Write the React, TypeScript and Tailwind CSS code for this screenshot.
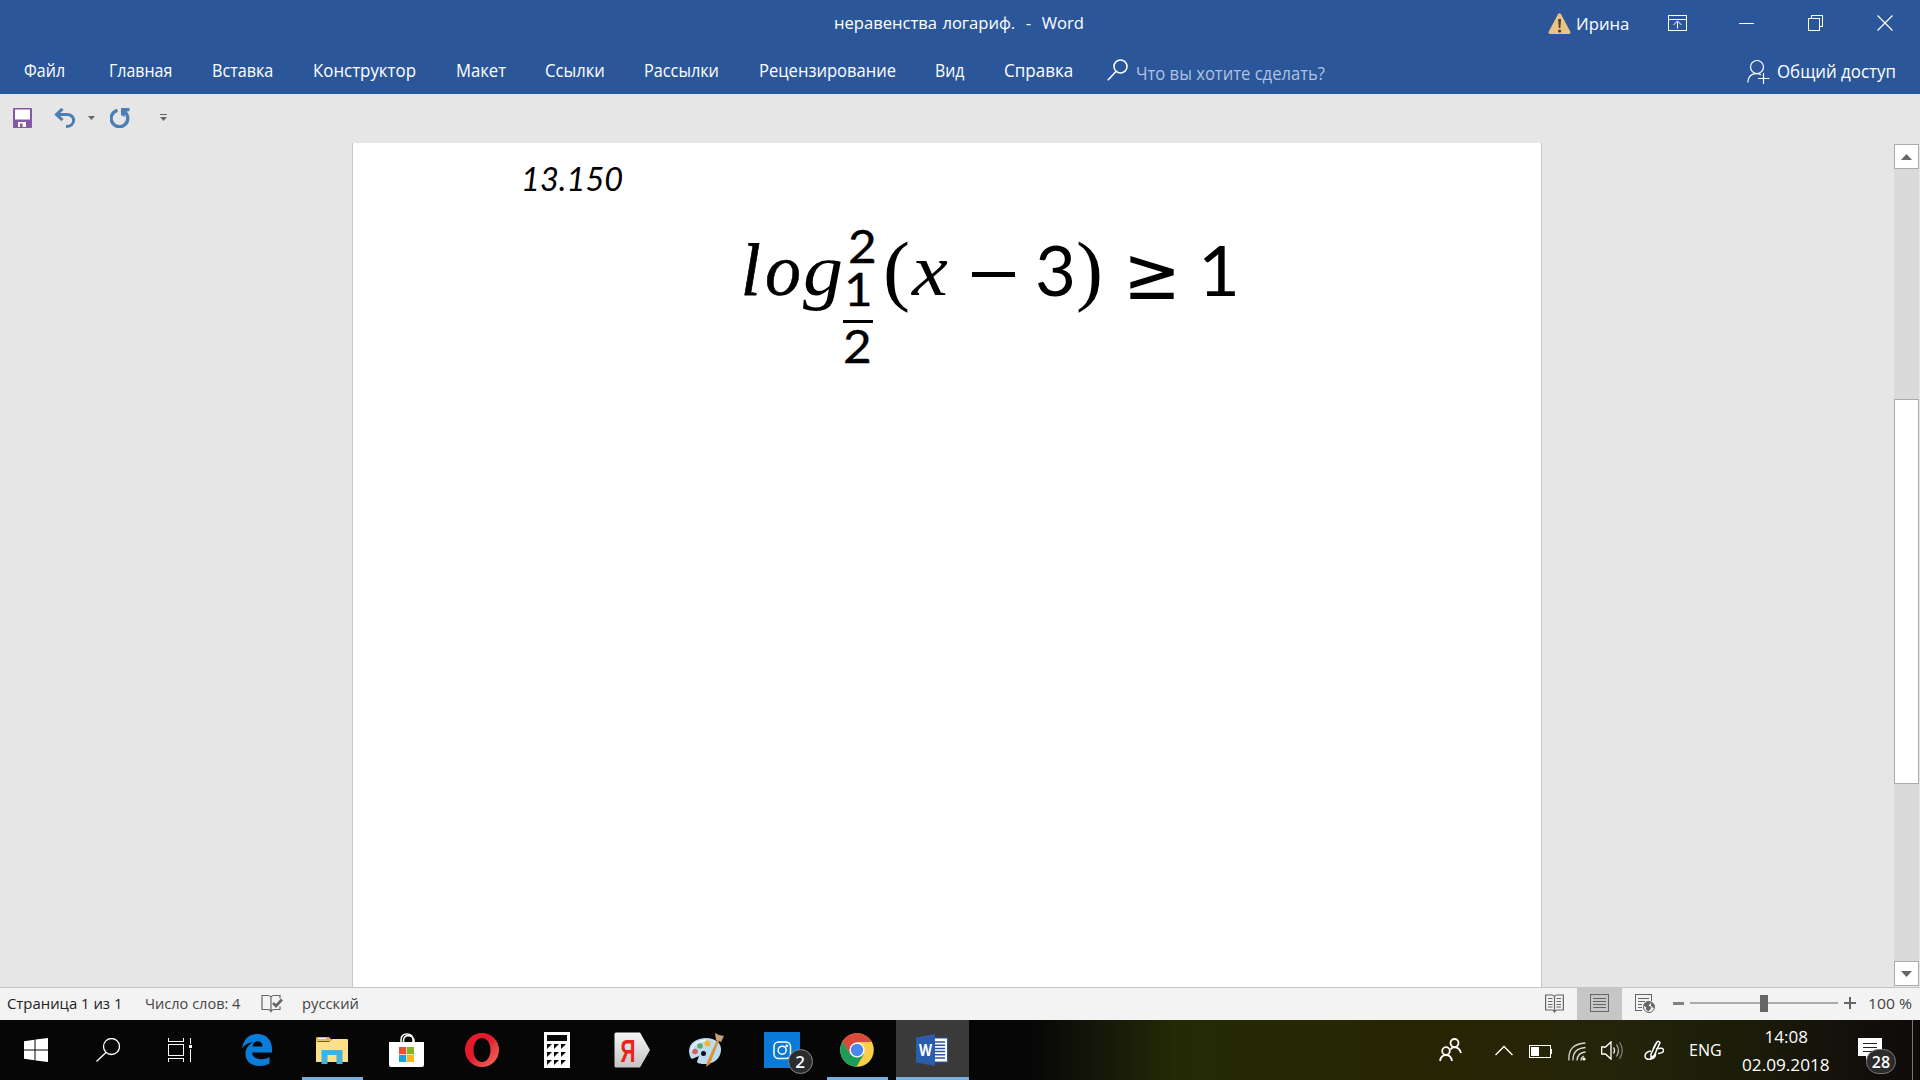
import { useLayoutEffect, useRef, useState, type ReactNode } from 'react'

const menuItems = [
  { label: 'Файл', className: 'mr-1 w-[41px]' },
  { label: 'Главная', className: 'w-[63px]' },
  { label: 'Вставка', className: 'w-[61px]' },
  { label: 'Конструктор', className: 'w-[103px]' },
  { label: 'Макет', className: '-mr-px w-[50px]' },
  { label: 'Ссылки', className: '-mr-px w-[60px]' },
  { label: 'Рассылки', className: 'w-[75px]' },
  { label: 'Рецензирование', className: '-mr-px w-[137px]' },
  { label: 'Вид', className: 'w-[29px]' },
  { label: 'Справка', className: 'w-[69px]' },
]

export default function App() {
  return (
    <div className="flex h-[1080px] w-[1920px] flex-col overflow-hidden bg-[#e6e6e6] font-['Open_Sans','Noto_Sans',sans-serif]">
      <header className="h-[94px] shrink-0 bg-[#2b579a] text-white">
        <TitleBar />
        <MenuBar />
      </header>
      <QuickAccess />
      <Workspace />
      <StatusBar />
      <Taskbar />
    </div>
  )
}

// Squeezes or stretches one line of text to the width of its box.
function FitText({ className, children }: { className: string; children: ReactNode }) {
  const box = useRef<HTMLSpanElement>(null)
  const text = useRef<HTMLSpanElement>(null)
  const [scale, setScale] = useState(1)

  useLayoutEffect(() => {
    if (!box.current || !text.current) return
    setScale(box.current.offsetWidth / text.current.offsetWidth)
  }, [])

  return (
    <span ref={box} className={`block shrink-0 whitespace-pre ${className}`}>
      <span
        ref={text}
        className="inline-block origin-left"
        style={{ transform: `scaleX(${scale})` }}
      >
        {children}
      </span>
    </span>
  )
}

function TitleBar() {
  return (
    <div className="flex h-[47px] items-center pl-[834px] text-[17px]">
      <FitText className="mb-px w-[250px] [word-spacing:1px]">{'неравенства логариф.  -  Word'}</FitText>
      <svg className="ml-[464px] h-[21px] w-[23px]" viewBox="0 0 23 21">
        <path d="M10 1.2Q11.500-.6 13 1.200L22.500 19Q22.800 21 21 21H2Q.2 21 .5 19Z" fill="#eac282" />
        <path d="M10.200 6h2.800l-.6 9h-1.600z" fill="#4a3f2d" />
        <circle cx="11.600" cy="18" r="1.600" fill="#4a3f2d" />
      </svg>
      <FitText className="ml-[5px] w-[53px]">Ирина</FitText>
      <svg className="mt-[-2px] ml-[39px] h-4 w-5" viewBox="0 0 20 16" fill="none" stroke="white" shapeRendering="crispEdges">
        <path d="M.5.5h18v15H.500zM.5 4.500h18" />
        <path d="M9.500 13.500v-7M5.500 10l4-4 4 4" shapeRendering="auto" />
      </svg>
      <svg className="ml-[51px] h-4 w-4" viewBox="0 0 16 16" stroke="white" shapeRendering="crispEdges">
        <path d="M0 7.500h15" />
      </svg>
      <svg className="mt-[-2px] ml-[53px] h-4 w-4" viewBox="0 0 16 16" fill="none" stroke="white" shapeRendering="crispEdges">
        <path d="M.5 3.500h11v12H.500zM3.500 3.500v-3h11v11h-3" />
      </svg>
      <svg className="mt-[-2px] ml-[53px] h-4 w-4" viewBox="0 0 16 16" stroke="white" strokeWidth="1.200">
        <path d="M.5.5l15 15M15.500.5l-15 15" />
      </svg>
    </div>
  )
}

function MenuBar() {
  return (
    <div className="flex h-[46px] items-center text-lg">
      <nav className="flex gap-10 pl-6">
        {menuItems.map((item) => (
          <FitText key={item.label} className={item.className}>
            {item.label}
          </FitText>
        ))}
      </nav>
      <svg className="ml-[34px] h-[22px] w-[21px]" viewBox="0 0 21 22" fill="none" stroke="white" strokeWidth="1.500">
        <circle cx="13.500" cy="7.500" r="6.500" />
        <path d="M9 12.500L.8 21.200" />
      </svg>
      <FitText className="mt-1.5 ml-2 w-[189px] text-[#afc2e0]">
        Что вы хотите сделать?
      </FitText>
      <svg className="mt-[3px] ml-auto h-[25px] w-[23px]" viewBox="0 0 23 25" fill="none" stroke="white" strokeWidth="1.200">
        <circle cx="10" cy="8" r="6.500" />
        <path d="M.7 23.500C1.200 17.500 5 14.600 9.500 14.600c2 0 3.500.5 4.500 1.200" />
        <path d="M16.500 14v11M11 19.500h11.500" />
      </svg>
      <FitText className="mt-0.5 mr-6 ml-[7px] w-[119px]">Общий доступ</FitText>
    </div>
  )
}

function QuickAccess() {
  return (
    <div className="flex h-[49px] shrink-0 items-center pb-0.5 pl-[13px]">
      <svg className="h-5 w-[19px]" viewBox="0 0 19 20">
        <rect width="19" height="20" rx="1" fill="#8558a5" />
        <path d="M2 1.500h15v10H2zM5 14h8v5H5z" fill="white" />
        <path d="M7 15.500h2.500V19H7z" fill="#8558a5" />
      </svg>
      <svg className="ml-[22px] h-5 w-[22px]" viewBox="0 0 22 20" fill="none" stroke="#4b7fb4" strokeWidth="3">
        <path d="M2 6.500h11c9 0 9 12-1 12" />
        <path d="M8.500.8L2.500 6.500l6 5.700" />
      </svg>
      <svg className="ml-3 h-1 w-[7px]" viewBox="0 0 7 4">
        <path d="M0 0h7L3.500 4z" fill="#666" />
      </svg>
      <svg className="ml-[15px] h-5 w-[20px]" viewBox="0 0 20 20">
        <path d="M7.500 2.300A8.300 8.300 0 1 0 14.500 3.800" fill="none" stroke="#4b7fb4" strokeWidth="3.400" />
        <path d="M11 0h8.500v3l-4.500 1-.5 5L11 7z" fill="#4b7fb4" />
      </svg>
      <svg className="ml-[30px] h-[7px] w-[7px]" viewBox="0 0 7 7" fill="#666">
        <path d="M0 0h7v1H0zM0 3h7L3.500 7z" />
      </svg>
    </div>
  )
}

function Workspace() {
  return (
    <main className="flex min-h-0 flex-1 justify-between">
      <div className="ml-[352px] w-[1190px] border-x border-[#c6c6c6] bg-white text-black">
        <FitText className="mt-4 ml-[168px] w-[102px] font-['Lato',sans-serif] text-[32px] leading-[40px] italic">
          13.150
        </FitText>
        <Formula />
      </div>
      <div className="mr-px flex w-[25px] flex-col pt-px pb-px">
        <ScrollButton path="M0 6L5.500 0 11 6z" />
        <div className="h-[230px] bg-[#dadada]" />
        <div className="h-[385px] border border-[#ababab] bg-white" />
        <div className="flex-1 bg-[#dadada]" />
        <ScrollButton path="M0 0h11L5.500 6z" />
      </div>
    </main>
  )
}

function ScrollButton({ path }: { path: string }) {
  return (
    <div className="flex h-[25px] shrink-0 items-center justify-center border border-[#ababab] bg-white">
      <svg className="h-1.5 w-[11px]" viewBox="0 0 11 6">
        <path d={path} fill="#666" />
      </svg>
    </div>
  )
}

function Formula() {
  return (
    <div className="mt-[34px] ml-[388px] flex items-start font-['Liberation_Serif',serif] text-[74px] leading-[74px]">
      <div className="flex italic">
        <FitText className="w-5 [-webkit-text-stroke:0.8px_black]">l</FitText>
        <FitText className="ml-1 w-[36px] [-webkit-text-stroke:0.5px_black]">o</FitText>
        <FitText className="ml-0.5 w-[40px]">g</FitText>
      </div>
      <div className="-mt-[9px] flex flex-col font-['Lato',sans-serif] text-[46px] leading-[43px] [-webkit-text-stroke:0.4px_black]">
        <FitText className="ml-[5px] h-[43px] w-[29px]">2</FitText>
        <FitText className="ml-px h-[53px] w-[29px]">1</FitText>
        <div className="h-[3px] w-[30px] bg-black" />
        <FitText className="mt-px h-[43px] w-[29px]">2</FitText>
      </div>
      <FitText className="ml-1.5 w-[27px] text-[78px]">(</FitText>
      <FitText className="ml-0.5 w-[36px] italic">x</FitText>
      <div className="mt-[39px] ml-[24px] h-[5px] w-[43px] bg-black" />
      <FitText className="ml-[20px] w-[41px] font-['Lato',sans-serif] text-[69px]">3</FitText>
      <FitText className="w-[27px] text-[78px]">)</FitText>
      <FitText className="mt-[3px] ml-5 w-[58px] font-['DejaVu_Sans',sans-serif] text-[74px]">≥</FitText>
      <FitText className="ml-[17px] w-[42px] font-['Lato',sans-serif] text-[69px]">1</FitText>
    </div>
  )
}

function StatusBar() {
  return (
    <footer className="flex h-[33px] shrink-0 items-center border-t border-[#c6c6c6] bg-[#f3f3f3] text-[15px] text-[#444]">
      <FitText className="mb-0.5 ml-[7px] w-[115px] text-[#222]">Страница 1 из 1</FitText>
      <FitText className="mb-0.5 ml-[23px] w-[95px]">Число слов: 4</FitText>
      <svg className="mb-0.5 ml-[21px] h-[19px] w-[22px]" viewBox="0 0 22 19" fill="none" stroke="#666" strokeWidth="1.200">
        <path d="M10 3V18M10 3Q9 1.500 7 1.500H1v14h6q2 0 3 2 1-2 3-2h6v-3M10 3q1-1.500 3-1.500h6v3" />
        <path d="M12 9l3 3 6-6.500" strokeWidth="2.600" />
      </svg>
      <FitText className="mb-0.5 ml-[19px] w-[57px]">русский</FitText>
      <div className="ml-auto flex h-full items-center">
        <svg className="mb-0.5 h-[19px] w-5" viewBox="0 0 20 19" fill="none" stroke="#666" strokeWidth="1.200">
          <path d="M9.500 2.500Q8.500 1 7 1H.6v15H7q1.500 0 2.500 2 1-2 2.500-2h6.400V1H12q-1.500 0-2.500 1.500V18" />
          <path d="M3 4.500h4.500M3 7.500h4.500M3 10.500h4.500M3 13h4.500M11.500 4.500H16M11.500 7.500H16M11.500 10.500H16M11.500 13H16" />
        </svg>
        <div className="ml-3 flex h-full w-[45px] items-center justify-center bg-[#c6c6c6] pb-0.5">
          <svg className="h-[19px] w-[19px]" viewBox="0 0 19 19" fill="none" stroke="#666" shapeRendering="crispEdges">
            <path d="M.5.5h18v17H.500zM3 4.500h13M3 7.500h13M3 10.500h13M3 13.500h13" />
          </svg>
        </div>
        <svg className="mb-0.5 ml-[13px] h-[19px] w-5" viewBox="0 0 20 19" fill="none" stroke="#666">
          <path d="M7 16.500H.5V.5h16v6M3 4.500h11M3 7.500h7M3 10.500h4M3 13.500h4" shapeRendering="crispEdges" />
          <circle cx="14" cy="13" r="5.500" fill="#f3f3f3" />
          <path d="M9 11q1-3 5-3.500l1 2-2 1.500 1 1.500 2 1-2.500 3.500-2-1.500v-2zM16 8l3 3-.5 2.500-2-1.500z" fill="#666" />
        </svg>
        <div className="mb-0.5 ml-[18px] h-[3px] w-[11px] bg-[#808080]" />
        <div className="mb-0.5 ml-1.5 flex h-full w-[148px] items-center">
          <div className="h-0.5 w-[70px] bg-[#ababab]" />
          <div className="h-[17px] w-2 bg-[#666]" />
          <div className="h-0.5 w-[70px] bg-[#ababab]" />
        </div>
        <svg className="mb-0.5 ml-1.5 h-3 w-3" viewBox="0 0 12 12" stroke="#666" strokeWidth="2">
          <path d="M0 6h12M6 0v12" />
        </svg>
        <FitText className="mr-2 mb-0.5 ml-3 w-[44px]">100 %</FitText>
      </div>
    </footer>
  )
}

function Taskbar() {
  return (
    <div className="flex h-[60px] shrink-0 items-center bg-[linear-gradient(90deg,#060606_0%,#060606_53.5%,#14160a_57%,#242b04_61.500%,#262804_68%,#272404_76%,#232409_84%,#1b1c09_91%,#120f0b_97%,#100b0a_100%)] text-[17px] text-white">
      <SystemSlot>
        <svg className="h-6 w-6" viewBox="0 0 24 24" fill="white">
          <path d="M0 3.300L10.500 1.800v9.700H0zM11.500 1.600L24 0v11.500H11.500zM0 12.500h10.500v9.800L0 20.700zM11.500 12.500H24V24l-12.500-1.600z" />
        </svg>
      </SystemSlot>
      <SystemSlot>
        <svg className="h-6 w-6" viewBox="0 0 24 24" fill="none" stroke="white" strokeWidth="1.300">
          <circle cx="15.500" cy="8.500" r="8" />
          <path d="M10 14.500L.5 23.500" />
        </svg>
      </SystemSlot>
      <SystemSlot>
        <svg className="h-6 w-6" viewBox="0 0 24 24" fill="none" stroke="white" shapeRendering="crispEdges">
          <path d="M.5 0v3.500h15V0M.5 6.500h15v11H.500zM.5 24v-3.500h15V24M22.500 0v6M22.500 11v13" />
          <path d="M21 7h3v3h-3z" fill="white" stroke="none" />
        </svg>
      </SystemSlot>
      <div className="ml-[5px] flex h-full gap-0.5">
        <AppSlot><EdgeIcon /></AppSlot>
        <AppSlot running><ExplorerIcon /></AppSlot>
        <AppSlot><StoreIcon /></AppSlot>
        <AppSlot><OperaIcon /></AppSlot>
        <AppSlot><CalculatorIcon /></AppSlot>
        <AppSlot><YandexIcon /></AppSlot>
        <AppSlot><PaintIcon /></AppSlot>
        <AppSlot><InstagramIcon /></AppSlot>
        <AppSlot running><ChromeIcon /></AppSlot>
        <AppSlot running active><WordIcon /></AppSlot>
      </div>
      <Tray />
    </div>
  )
}

function SystemSlot({ children }: { children: ReactNode }) {
  return <div className="flex h-full w-[72px] items-center justify-center">{children}</div>
}

function AppSlot({
  running = false,
  active = false,
  children,
}: {
  running?: boolean
  active?: boolean
  children: ReactNode
}) {
  return (
    <div
      className={`flex h-full w-[73px] flex-col items-center ${active ? 'bg-[#3a3a3a]' : ''}`}
    >
      <div className="flex h-[57px] items-center pt-[3px] pr-0.5">{children}</div>
      {running && <div className={`h-[3px] bg-[#76b0e0] ${active ? 'w-full' : 'w-[61px]'}`} />}
    </div>
  )
}

function EdgeIcon() {
  return (
    <svg className="h-8 w-[30px]" viewBox="0 0 30 32">
      <path
        d="M0 14.500C1.500 5.500 7 0 15.500 0 24 0 30 6 30 14.500v4H10.200c.2 4.500 4 6.800 9 6.800 3 0 6-.8 8.300-2.200v6.500C25 31.200 21.500 32 17.500 32 9 32 3.500 27 3.500 20c0-5.500 3-9.500 8-12C6.500 8.500 3 10.500 0 14.500zM10.500 12.500h10c0-3.300-1.700-5.300-4.800-5.300-2.800 0-4.700 2-5.200 5.300z"
        fill="#0c7cd9"
      />
    </svg>
  )
}

function ExplorerIcon() {
  return (
    <svg className="h-[27px] w-8" viewBox="0 0 32 27">
      <path d="M0 1Q0 0 1 0h12l2 3H0z" fill="#e0b03c" />
      <path d="M0 5h13l3-3h15q1 0 1 1v22H0z" fill="#fbe08a" />
      <path d="M0 5Q0 3.500 2 3.500h11l2-1.500" fill="none" stroke="#e8c055" strokeWidth="2" />
      <path d="M2 1.500h8" stroke="white" />
      <path d="M5.500 13h21v14h-6v-9h-9v9h-6z" fill="#43b1dc" />
    </svg>
  )
}

function StoreIcon() {
  return (
    <svg className="h-[34px] w-[35px]" viewBox="0 0 35 34">
      <path d="M12 10V7q0-6 6-6t6 6v3M14.500 9V7q.5-4 4.500-4.500 5 .5 6 4.500v2" fill="none" stroke="white" strokeWidth="1.500" />
      <path d="M0 9h35v23q0 2-2 2H2q-2 0-2-2z" fill="white" />
      <path d="M10 14h7.300v7.300H10z" fill="#e8532d" />
      <path d="M18 14h7v7.300h-7z" fill="#7fb81c" />
      <path d="M10 22h7.300v7H10z" fill="#1ba0e2" />
      <path d="M18 22h7v7h-7z" fill="#f5b91a" />
    </svg>
  )
}

function OperaIcon() {
  return (
    <svg className="h-[34px] w-[34px]" viewBox="0 0 34 34">
      <defs>
        <linearGradient id="opera" x1="0" x2="1" y1="0" y2="1">
          <stop offset="0" stopColor="#f0192e" />
          <stop offset=".45" stopColor="#e01a2c" />
          <stop offset=".6" stopColor="#e03a3c" />
          <stop offset="1" stopColor="#ff6a60" />
        </linearGradient>
      </defs>
      <path d="M17 0a17 17 0 1 0 0 34 17 17 0 0 0 0-34zm0 5c5 0 8.500 5.500 8.500 12S22 29 17 29 8.500 23.500 8.500 17 12 5 17 5z" fill="url(#opera)" fillRule="evenodd" />
    </svg>
  )
}

function CalculatorIcon() {
  const cells = [0, 1, 2].flatMap((row) => [0, 1, 2].map((col) => ({ x: 3 + col * 7, y: 12 + row * 8 })))
  return (
    <svg className="h-9 w-[26px]" viewBox="0 0 26 36">
      <path d="M0 0h26v36H0z" fill="white" />
      <path d="M3 3h20v6H3z" fill="#080808" />
      {cells.map(({ x, y }) => (
        <path key={`${x}-${y}`} d={`M${x} ${y}h5l-5 5z`} fill="#080808" />
      ))}
    </svg>
  )
}

function YandexIcon() {
  return (
    <svg className="h-9 w-9" viewBox="0 0 36 36">
      <defs>
        <linearGradient id="yandex" x1="0" x2="0" y1="0" y2="1">
          <stop offset="0" stopColor="#f5f5f5" />
          <stop offset="1" stopColor="#c4c4c4" />
        </linearGradient>
      </defs>
      <path d="M2 .5h24L36 18 26 35.500H2Q.5 35.500.5 34V2Q.5.5 2 .5z" fill="url(#yandex)" />
      <text x="6.500" y="30" fontSize="32" fontWeight="700" fontFamily="Liberation Sans, sans-serif" fill="#e8241c" textLength="15" lengthAdjust="spacingAndGlyphs">
        Я
      </text>
    </svg>
  )
}

function PaintIcon() {
  return (
    <svg className="h-[35px] w-[35px]" viewBox="0 0 35 35">
      <path d="M0 18C0 10 8 5 17 5c9 0 16 5 15 13-1 8-8 13-15 13-5 0-9-.5-9-2.500L10 23 3 26Q0 23 0 18z" fill="#bcdcf2" />
      <path d="M3 18C3 11 10 7.500 17 7.500" fill="none" stroke="#e8f5fd" strokeWidth="2" />
      <circle cx="14.500" cy="20.500" r="2.500" fill="#0b1118" />
      <circle cx="6" cy="18.500" r="2.800" fill="#d2605a" />
      <circle cx="11" cy="13" r="2.800" fill="#5cae5c" />
      <circle cx="18.500" cy="10.500" r="3" fill="#efb631" />
      <path d="M28 7l2 1-9 23-4 3 1-5z" fill="#dc9434" />
      <path d="M26 0l4 2 5 1-3 6-5-2z" fill="#c9a077" />
    </svg>
  )
}

function InstagramIcon() {
  return (
    <div className="relative">
      <svg className="h-9 w-9" viewBox="0 0 36 36" fill="none" stroke="white" strokeWidth="1.500">
        <path d="M0 0h36v36H0z" fill="#0a7ad8" stroke="none" />
        <rect x="10" y="10" width="16.500" height="16.500" rx="4.500" />
        <circle cx="18.200" cy="18.200" r="4" />
        <circle cx="22.800" cy="13.800" r=".6" />
      </svg>
      <span className="absolute top-[17px] left-6 flex h-[25px] w-[25px] items-center justify-center rounded-full border border-[#888] bg-[#2a2c2e] text-[17px] font-semibold">
        2
      </span>
    </div>
  )
}

function ChromeIcon() {
  return (
    <svg className="h-[34px] w-[34px]" viewBox="0 0 34 34">
      <circle cx="17" cy="17" r="16.800" fill="#fcce49" />
      <path d="M2.500 8.500A16.800 16.800 0 0 1 31.700 8.900H17L9.500 21z" fill="#d9493c" />
      <path d="M2.500 8.500A16.800 16.800 0 0 0 16.500 33.800L24 21H10z" fill="#1b9c59" />
      <circle cx="17" cy="17" r="7.600" fill="white" />
      <circle cx="17" cy="17" r="6.200" fill="#4a88f0" />
    </svg>
  )
}

function WordIcon() {
  return (
    <svg className="h-8 w-8" viewBox="0 0 32 32">
      <path d="M17 4h14.500v24H17z" fill="white" stroke="#2b579a" />
      <path d="M19 8h10M19 11.200h10M19 14.400h10M19 17.600h10M19 20.800h10M19 24h10" stroke="#2b579a" strokeWidth="1.500" />
      <path d="M0 3.500L19 0v32L0 28.500z" fill="#2a5dab" />
      <text x="3" y="21.500" fontSize="16" fontWeight="700" fontFamily="Open Sans, sans-serif" fill="white" textLength="13" lengthAdjust="spacingAndGlyphs">
        W
      </text>
    </svg>
  )
}

function Tray() {
  return (
    <div className="ml-auto flex h-full items-center">
      <svg className="h-6 w-[23px]" viewBox="0 0 23 24" fill="none" stroke="white" strokeWidth="1.800">
        <circle cx="15.500" cy="5" r="4" />
        <path d="M11.500 11.500Q13 9 15.500 9q5 .5 6.500 6" />
        <circle cx="7" cy="13" r="3.800" />
        <path d="M1 23q1-6 6-6t6 6" />
      </svg>
      <svg className="ml-[33px] h-[11px] w-[18px]" viewBox="0 0 18 11" fill="none" stroke="white" strokeWidth="1.400">
        <path d="M.5 10L9 1.500l8.500 8.500" />
      </svg>
      <svg className="mt-0.5 ml-4 h-[13px] w-[23px]" viewBox="0 0 23 13" fill="none" stroke="white" shapeRendering="crispEdges">
        <path d="M.5.5h21v12H.500zM22.500 4v5" />
        <path d="M2 2h8v9H2z" fill="white" stroke="none" />
      </svg>
      <svg className="mt-0.5 ml-4 h-[19px] w-[18px]" viewBox="0 0 18 19" fill="none" stroke="#d8d8d0" strokeWidth="1.300">
        <path d="M1 18.500Q-.5 2 17.500 1M5 18.500Q4.500 6.500 17.500 5.500M9 18.500Q9.500 10.500 17.500 10M13 18.500q0-3 3-4.500" />
        <circle cx="16" cy="17" r="1.600" fill="white" stroke="none" />
      </svg>
      <svg className="ml-[15px] h-[19px] w-[23px]" viewBox="0 0 23 19" fill="none" stroke="white" strokeWidth="1.300">
        <path d="M.7 6h3.800L10 .9v17.200L4.500 13H.700zM12.500 6.500q2 3 0 6" />
        <path d="M15.500 3.500q4 6 0 12" stroke="#aaa" />
        <path d="M18.500 1.200q5.500 8.300 0 16.600" stroke="#777" />
      </svg>
      <svg className="ml-5 h-[21px] w-5" viewBox="0 0 20 21" fill="none" stroke="white" strokeWidth="1.500">
        <path d="M7 14L13 2q1.500-1.500 3 .5L10.500 15 7 18zM9 9l3-6M12 9q7-2 7.500 1T14 13.500M7 11q-6 1-6 5t6 3q5-1 4.500-6" />
      </svg>
      <FitText className="ml-[25px] w-[33px]">ENG</FitText>
      <div className="mt-px ml-5 flex w-[88px] flex-col items-center leading-7">
        <FitText className="w-[43px]">14:08</FitText>
        <FitText className="w-[88px]">02.09.2018</FitText>
      </div>
      <div className="relative ml-7">
        <svg className="h-6 w-6" viewBox="0 0 24 24">
          <path d="M0 0h24v18H13l-5 5v-5H0z" fill="white" />
          <path d="M5 5.500h14M5 9.500h14M5 13.500h9" stroke="#222" shapeRendering="crispEdges" />
        </svg>
        <span className="absolute top-[11px] left-2 flex h-[25px] w-[30px] items-center justify-center rounded-full border border-[#777] bg-[#2c2c2c] text-base font-semibold">
          28
        </span>
      </div>
      <div className="mr-[7px] ml-[30px] h-full w-px bg-[#777]" />
    </div>
  )
}
